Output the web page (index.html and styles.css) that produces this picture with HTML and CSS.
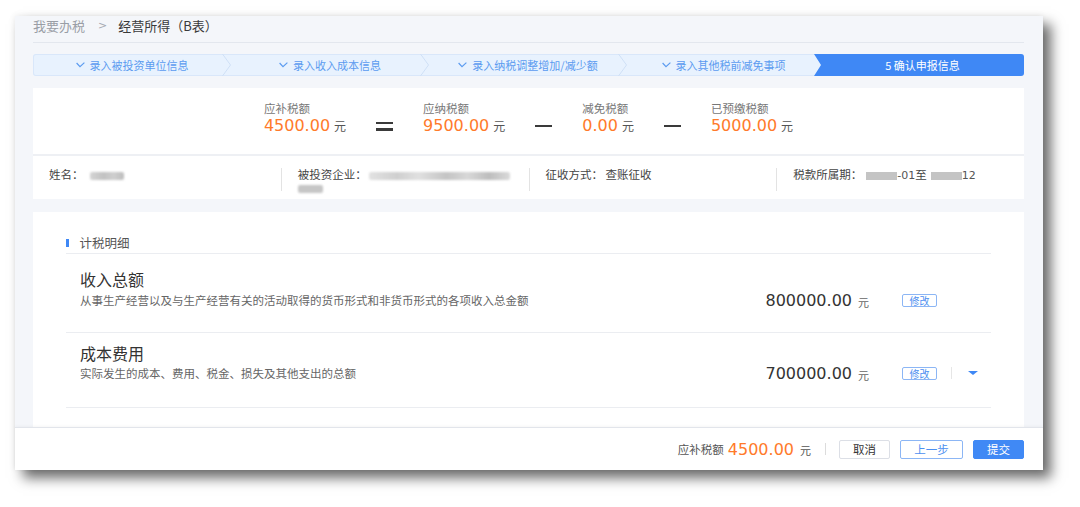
FILE: index.html
```html
<!DOCTYPE html>
<html lang="zh">
<head>
<meta charset="utf-8">
<title>经营所得（B表）</title>
<link rel="stylesheet" href="styles.css">
</head>
<body>
<div class="stage">
  <div class="frame">
    <div class="content">
      <div class="crumb">
        <span class="crumb-home">我要办税</span>
        <span class="crumb-sep">&gt;</span>
        <span class="crumb-cur">经营所得（B表）</span>
      </div>

      <div class="steps">
        <div class="step step-w">
          <span class="step-label pad"><svg class="check" viewBox="0 0 9 6"><polyline points="0.6,1 4,4.6 8.4,0.6"/></svg>录入被投资单位信息</span>
          <svg class="chev" viewBox="0 0 9 22"><polyline points="0.5,0 8.5,11 0.5,22"/></svg>
        </div>
        <div class="step step-w">
          <span class="step-label pad"><svg class="check" viewBox="0 0 9 6"><polyline points="0.6,1 4,4.6 8.4,0.6"/></svg>录入收入成本信息</span>
          <svg class="chev" viewBox="0 0 9 22"><polyline points="0.5,0 8.5,11 0.5,22"/></svg>
        </div>
        <div class="step step-w">
          <span class="step-label pad"><svg class="check" viewBox="0 0 9 6"><polyline points="0.6,1 4,4.6 8.4,0.6"/></svg>录入纳税调整增加/减少额</span>
          <svg class="chev" viewBox="0 0 9 22"><polyline points="0.5,0 8.5,11 0.5,22"/></svg>
        </div>
        <div class="step step-fill">
          <span class="step-label pad-s"><svg class="check" viewBox="0 0 9 6"><polyline points="0.6,1 4,4.6 8.4,0.6"/></svg>录入其他税前减免事项</span>
        </div>
        <div class="step step-active">
          <span class="step-label pad-a">5 确认申报信息</span>
        </div>
      </div>

      <div class="summary-card">
        <div class="formula">
          <div class="fitem">
            <div class="flabel">应补税额</div>
            <div class="fvalue"><span class="num">4500.00</span><span class="unit">元</span></div>
          </div>
          <div class="op op-eq"><i></i><i></i></div>
          <div class="fitem">
            <div class="flabel">应纳税额</div>
            <div class="fvalue"><span class="num">9500.00</span><span class="unit">元</span></div>
          </div>
          <div class="op op-minus"><i></i></div>
          <div class="fitem">
            <div class="flabel">减免税额</div>
            <div class="fvalue"><span class="num">0.00</span><span class="unit">元</span></div>
          </div>
          <div class="op op-minus"><i></i></div>
          <div class="fitem">
            <div class="flabel">已预缴税额</div>
            <div class="fvalue"><span class="num">5000.00</span><span class="unit">元</span></div>
          </div>
        </div>
        <div class="info">
          <div class="info-col first">姓名：<span class="blur b-name"></span></div>
          <div class="info-col">被投资企业：<span class="blur b-corp"></span><br><span class="blur b-corp2"></span></div>
          <div class="info-col">征收方式：&nbsp;查账征收</div>
          <div class="info-col">税款所属期：<span class="blur b-date"></span><span class="digits">-01</span>至<span class="blur b-date"></span><span class="digits">12</span></div>
        </div>
      </div>

      <div class="detail-card">
        <div class="detail-head"><span class="head-bar"></span>计税明细</div>
        <div class="row row-first">
          <div class="row-main">
            <div class="row-title">收入总额</div>
            <div class="row-desc">从事生产经营以及与生产经营有关的活动取得的货币形式和非货币形式的各项收入总金额</div>
          </div>
          <div class="row-side">
            <span class="amount">800000.00</span><span class="amount-unit">元</span>
            <span class="edit-btn">修改</span>
            <span class="row-extra hidden"><span class="vsep"></span><span class="caret"></span></span>
          </div>
        </div>
        <div class="row">
          <div class="row-main">
            <div class="row-title">成本费用</div>
            <div class="row-desc">实际发生的成本、费用、税金、损失及其他支出的总额</div>
          </div>
          <div class="row-side">
            <span class="amount">700000.00</span><span class="amount-unit">元</span>
            <span class="edit-btn">修改</span>
            <span class="row-extra"><span class="vsep"></span><span class="caret"></span></span>
          </div>
        </div>
      </div>
    </div>

    <div class="footer">
      <span class="foot-label">应补税额</span>
      <span class="foot-num">4500.00</span>
      <span class="foot-unit">元</span>
      <span class="foot-sep"></span>
      <span class="btn btn-plain">取消</span>
      <span class="btn btn-outline">上一步</span>
      <span class="btn btn-primary">提交</span>
    </div>
  </div>
</div>
</body>
</html>
```

FILE: styles.css
```css
* { box-sizing: border-box; }

html, body {
  margin: 0;
  padding: 0;
  background: #ffffff;
}

body {
  font-family: "Noto Sans CJK SC", "Noto Sans", sans-serif;
  color: #333;
  width: 1080px;
  height: 507px;
  overflow: hidden;
}

.stage {
  padding: 16px 0 0 15px;
}

.frame {
  width: 1028px;
  height: 454px;
  background: #f4f6fa;
  display: flex;
  flex-direction: column;
  box-shadow: 8px 8px 12px rgba(0, 0, 0, 0.58), -1px -1px 6px rgba(0, 0, 0, 0.06);
}

.content {
  flex: 1;
  overflow: hidden;
  padding: 0 19px 0 18px;
}

/* breadcrumb */
.crumb {
  height: 27px;
  line-height: 19px;
  font-size: 13px;
  border-bottom: 1px solid #e3e7ee;
  display: flex;
  align-items: flex-start;
}
.crumb-home { color: #9a9ea6; }
.crumb-sep { color: #a6aab2; margin: 0 11px 0 13px; font-family: "DejaVu Sans", sans-serif; font-size: 11px; }
.crumb-cur { color: #3a3a3a; font-weight: 400; }

/* steps */
.steps {
  margin-top: 11px;
  height: 22px;
  display: flex;
  background: #e8f2fe;
  box-shadow: inset 0 0 0 1px #d9e7fa;
  border-radius: 3px;
  overflow: hidden;
}
.step {
  display: flex;
  align-items: center;
  height: 22px;
  font-size: 11px;
  line-height: 14px;
  color: #5b9bf0;
  white-space: nowrap;
}
.step-w { flex: 0 0 198px; }
.step-fill { flex: 1; }
.step-active {
  flex: 0 0 210px;
  background: #3f88f5;
  color: #ffffff;
  clip-path: polygon(0 0, 100% 0, 100% 100%, 0 100%, 7px 50%);
}
.step-label {
  flex: 1;
  display: flex;
  align-items: center;
  justify-content: center;
  padding-bottom: 1px;
}
.pad { padding-left: 9px; }
.pad-s { padding-left: 6px; }
.pad-a { padding-left: 7px; }
.check {
  width: 9px;
  height: 6px;
  margin-right: 5px;
  fill: none;
  stroke: #5b9bf0;
  stroke-width: 1.2;
}
.chev {
  width: 9px;
  height: 22px;
  flex: 0 0 9px;
  fill: none;
  stroke: #cfe0f6;
  stroke-width: 1;
}

/* summary */
.summary-card {
  margin-top: 12px;
  background: #ffffff;
}
.formula {
  display: flex;
  justify-content: center;
  align-items: flex-end;
  gap: 30px;
  padding: 12px 0 18px;
  border-bottom: 2px solid #eef0f4;
}
.fitem { display: flex; flex-direction: column; }
.flabel {
  font-size: 11.5px;
  line-height: 16px;
  color: #777;
}
.fvalue {
  height: 20px;
  line-height: 20px;
  display: flex;
  align-items: baseline;
  gap: 4px;
}
.num {
  font-family: "DejaVu Sans", sans-serif;
  font-size: 16px;
  color: #ff7a2a;
}
.unit {
  font-size: 12px;
  color: #555;
}
.op {
  height: 20px;
  width: 17px;
  display: flex;
  flex-direction: column;
  justify-content: center;
  gap: 4px;
}
.op i {
  display: block;
  height: 2.5px;
  background: #3a3a3a;
}

.info {
  display: grid;
  grid-template-columns: repeat(4, 1fr);
  height: 43px;
  padding-top: 12px;
  font-size: 11.5px;
  line-height: 13px;
  color: #444;
}
.info-col {
  height: 23px;
  padding-left: 16px;
  border-left: 1px solid #e3e3e3;
  white-space: nowrap;
}
.info-col.first { border-left: none; }
.blur {
  display: inline-block;
  height: 8px;
  vertical-align: -1px;
  border-radius: 2px;
  filter: blur(0.8px);
}
.b-name { width: 34px; margin-left: 6px; background: linear-gradient(90deg, #d4d4d4, #c2c2c2 40%, #cfcfcf 70%, #bdbdbd); }
.b-corp { width: 141px; margin-left: 2px; background: linear-gradient(90deg, #e2e2e2, #cfcfcf 20%, #e0e0e0 35%, #c4c4c4 55%, #d8d8d8 70%, #bdbdbd 85%, #dadada); }
.b-corp2 { width: 25px; margin-top: 1px; background: #c6c6c6; }
.b-date { width: 31px; margin-left: 4px; background: #c4c4c4; filter: none; border-radius: 0; }
.digits { font-family: "DejaVu Sans", sans-serif; font-size: 11px; color: #555; }

/* detail */
.detail-card {
  margin-top: 13px;
  background: #ffffff;
  padding: 21px 33px 40px;
}
.detail-head {
  height: 21px;
  line-height: 20px;
  font-size: 12.5px;
  color: #555;
  border-bottom: 1px solid #ebedf1;
  display: flex;
  align-items: center;
}
.head-bar {
  width: 2.5px;
  height: 8px;
  background: #3f88f5;
  margin-right: 11px;
}
.row {
  display: flex;
  justify-content: space-between;
  align-items: flex-end;
  padding: 10px 0 26px 14px;
  border-bottom: 1px solid #ebedf1;
}
.row-first { padding: 15px 0 24px 14px; }
.row-title {
  font-size: 16px;
  line-height: 20px;
  color: #333;
}
.row-desc {
  margin-top: 2px;
  font-size: 11.5px;
  line-height: 16px;
  color: #666;
}
.row-first .row-desc { margin-top: 3px; }
.row-side {
  display: flex;
  align-items: center;
  height: 16px;
}
.amount {
  font-family: "DejaVu Sans", sans-serif;
  font-size: 16px;
  color: #333;
}
.amount-unit {
  font-size: 11px;
  color: #666;
  margin-left: 6px;
  margin-top: 3px;
}
.edit-btn {
  margin-left: 33px;
  width: 35px;
  height: 13px;
  line-height: 11px;
  border: 1px solid #8cb6f5;
  border-radius: 2px;
  font-size: 10px;
  color: #4d8ff0;
  text-align: center;
}
.row-extra {
  width: 54px;
  display: flex;
  align-items: center;
}
.row-extra.hidden { visibility: hidden; }
.vsep {
  width: 1px;
  height: 12px;
  background: #e6e6e6;
  margin-left: 14px;
}
.caret {
  margin-left: 16px;
  width: 0;
  height: 0;
  border-left: 5px solid transparent;
  border-right: 5px solid transparent;
  border-top: 4px solid #3f88f5;
}

/* footer */
.footer {
  height: 43px;
  flex: 0 0 43px;
  background: #ffffff;
  border-top: 1px solid #e2e5eb;
  box-shadow: 0 -1px 3px rgba(0, 0, 0, 0.04);
  display: flex;
  align-items: center;
  justify-content: flex-end;
  padding-right: 19px;
}
.foot-label {
  font-size: 11.5px;
  color: #555;
  margin-right: 4px;
}
.foot-num {
  font-family: "DejaVu Sans", sans-serif;
  font-size: 16px;
  color: #ff7a2a;
}
.foot-unit {
  font-size: 11px;
  color: #555;
  margin-left: 6px;
  margin-top: 2px;
}
.foot-sep {
  width: 1px;
  height: 12px;
  background: #dcdcdc;
  margin: 0 13px 0 14px;
}
.btn {
  height: 19px;
  line-height: 17px;
  font-size: 11.5px;
  text-align: center;
  border-radius: 2px;
  border: 1px solid #dcdfe6;
}
.btn + .btn { margin-left: 10px; }
.btn-plain { width: 51px; background: #fff; color: #333; }
.btn-outline { width: 63px; background: #fff; color: #4d8ff0; border-color: #8cb6f5; }
.btn-primary { width: 51px; background: #4089f5; color: #fff; border-color: #4089f5; }
```
